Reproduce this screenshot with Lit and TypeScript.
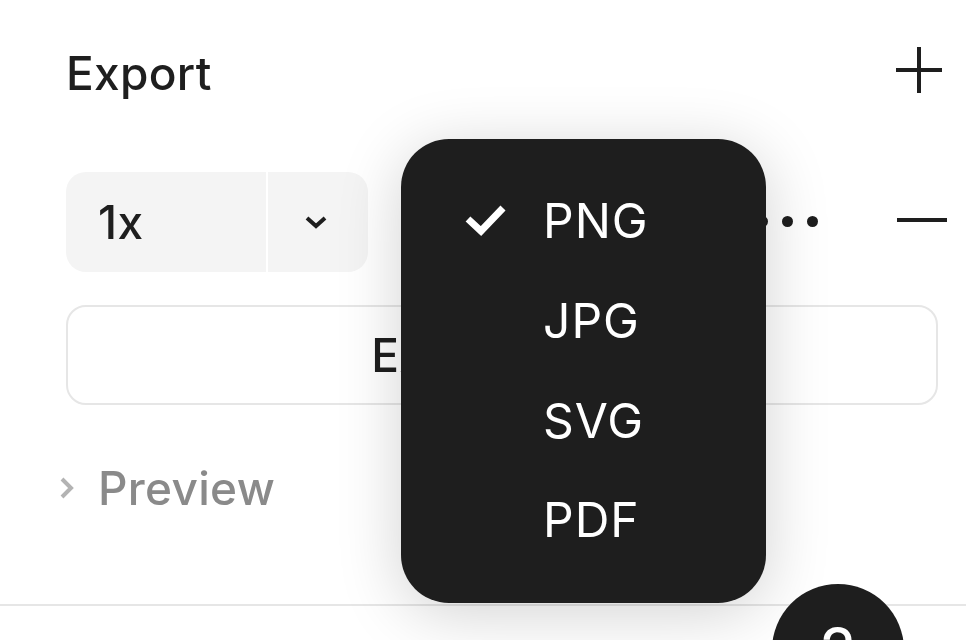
import {css, html, LitElement} from 'lit';
import {customElement} from 'lit/decorators.js';

const FORMATS = ['PNG', 'JPG', 'SVG', 'PDF'];

@customElement("app-root")
export default class AppRoot extends LitElement {
    static styles = css`
        :host {
            display: block;
            font-family: Inter, "Liberation Sans", sans-serif;
            font-size: 46px;
            font-weight: 450;
            letter-spacing: 0.3px;
            color: #1e1e1e;
        }

        .page {
            position: relative;
            width: 966px;
            height: 640px;
            overflow: hidden;
            background: white;
            filter: blur(0.7px);
        }

        .panel {
            display: flex;
            flex-direction: column;
            height: 606px;
            box-sizing: border-box;
            padding: 0 19px 0 66px;
            border-bottom: 2px solid #e6e6e6;
        }

        .header {
            display: flex;
            justify-content: space-between;
            align-items: center;
            height: 146px;
        }

        .plus {
            display: block;
            width: 56px;
            height: 56px;
            margin: -6px 0 0 0;
            stroke: #1e1e1e;
            stroke-width: 4;
            fill: none;
        }

        .minus {
            display: block;
            width: 50px;
            height: 4px;
            background: #1e1e1e;
            margin-top: -4px;
        }

        .settings {
            display: flex;
            align-items: center;
            justify-content: space-between;
            height: 100px;
            margin-top: 26px;
        }

        .select {
            display: grid;
            grid-template-columns: 200px 100px;
            gap: 2px;
            height: 100px;
        }

        .select div {
            display: flex;
            align-items: center;
            background: #f4f4f4;
        }

        .select .value {
            padding-left: 32px;
            box-sizing: border-box;
            border-radius: 20px 0 0 20px;
        }

        .select .caret {
            justify-content: center;
            padding-right: 4px;
            border-radius: 0 20px 20px 0;
        }

        .caret svg {
            width: 28px;
            height: 28px;
            stroke: #1e1e1e;
            stroke-width: 4;
            fill: none;
        }

        .row-end {
            display: flex;
            align-items: center;
            gap: 79px;
        }

        .dots {
            display: flex;
            gap: 14px;
            margin-top: -2px;
        }

        .dots span {
            width: 11px;
            height: 11px;
            border-radius: 50%;
            background: #1e1e1e;
        }

        .export-btn {
            display: flex;
            align-items: center;
            justify-content: center;
            height: 100px;
            margin: 33px 9px 0 0;
            padding-left: 20px;
            box-sizing: border-box;
            border: 2px solid #e6e6e6;
            border-radius: 20px;
        }

        .preview {
            display: flex;
            align-items: center;
            gap: 22px;
            height: 100px;
            margin: 33px 0 0 -6px;
            color: #8a8a8a;
        }

        .preview svg {
            width: 16px;
            height: 28px;
            stroke: #b3b3b3;
            stroke-width: 4;
            fill: none;
        }

        .menu {
            position: absolute;
            left: 401px;
            top: 139px;
            width: 365px;
            height: 464px;
            box-sizing: border-box;
            padding: 32px 0;
            border-radius: 48px;
            background: #1e1e1e;
            color: white;
            font-size: 48px;
            font-weight: 400;
            letter-spacing: 1px;
            box-shadow: 0 10px 64px rgba(0, 0, 0, 0.18);
        }

        .menu-item {
            display: flex;
            align-items: center;
            height: 99.67px;
            padding-left: 142px;
            position: relative;
        }

        .menu-item svg {
            position: absolute;
            left: 64px;
            top: 32px;
            width: 42px;
            height: 36px;
            stroke: white;
            stroke-width: 7;
            fill: none;
        }

        .help {
            position: absolute;
            left: 772px;
            top: 584px;
            width: 132px;
            height: 132px;
            display: flex;
            justify-content: center;
            padding-top: 35px;
            box-sizing: border-box;
            border-radius: 50%;
            background: #1e1e1e;
            color: white;
            font-size: 66px;
            font-weight: 400;
            line-height: 1;
        }
    `;

    render() {
        return html`
            <div class="page">
                <div class="panel">
                    <div class="header">
                        <span>Export</span>
                        <svg class="plus" viewBox="0 0 56 56"><path d="M28 5v46M5 28h46"/></svg>
                    </div>
                    <div class="settings">
                        <div class="select">
                            <div class="value">1x</div>
                            <div class="caret">
                                <svg viewBox="0 0 28 28"><path d="M5 10l9 8 9-8"/></svg>
                            </div>
                        </div>
                        <div class="row-end">
                            <div class="dots"><span></span><span></span><span></span></div>
                            <div class="minus"></div>
                        </div>
                    </div>
                    <div class="export-btn">Export Layer</div>
                    <div class="preview">
                        <svg viewBox="0 0 16 28"><path d="M2 5l9 9-9 9"/></svg>
                        <span>Preview</span>
                    </div>
                </div>

                <div class="menu">
                    ${FORMATS.map((name, i) => html`
                        <div class="menu-item">
                            ${i === 0 ? html`<svg viewBox="0 0 42 36"><path d="M3 16l13 12L38 5"/></svg>` : ''}
                            ${name}
                        </div>
                    `)}
                </div>

                <div class="help">?</div>
            </div>
        `;
    }
}
